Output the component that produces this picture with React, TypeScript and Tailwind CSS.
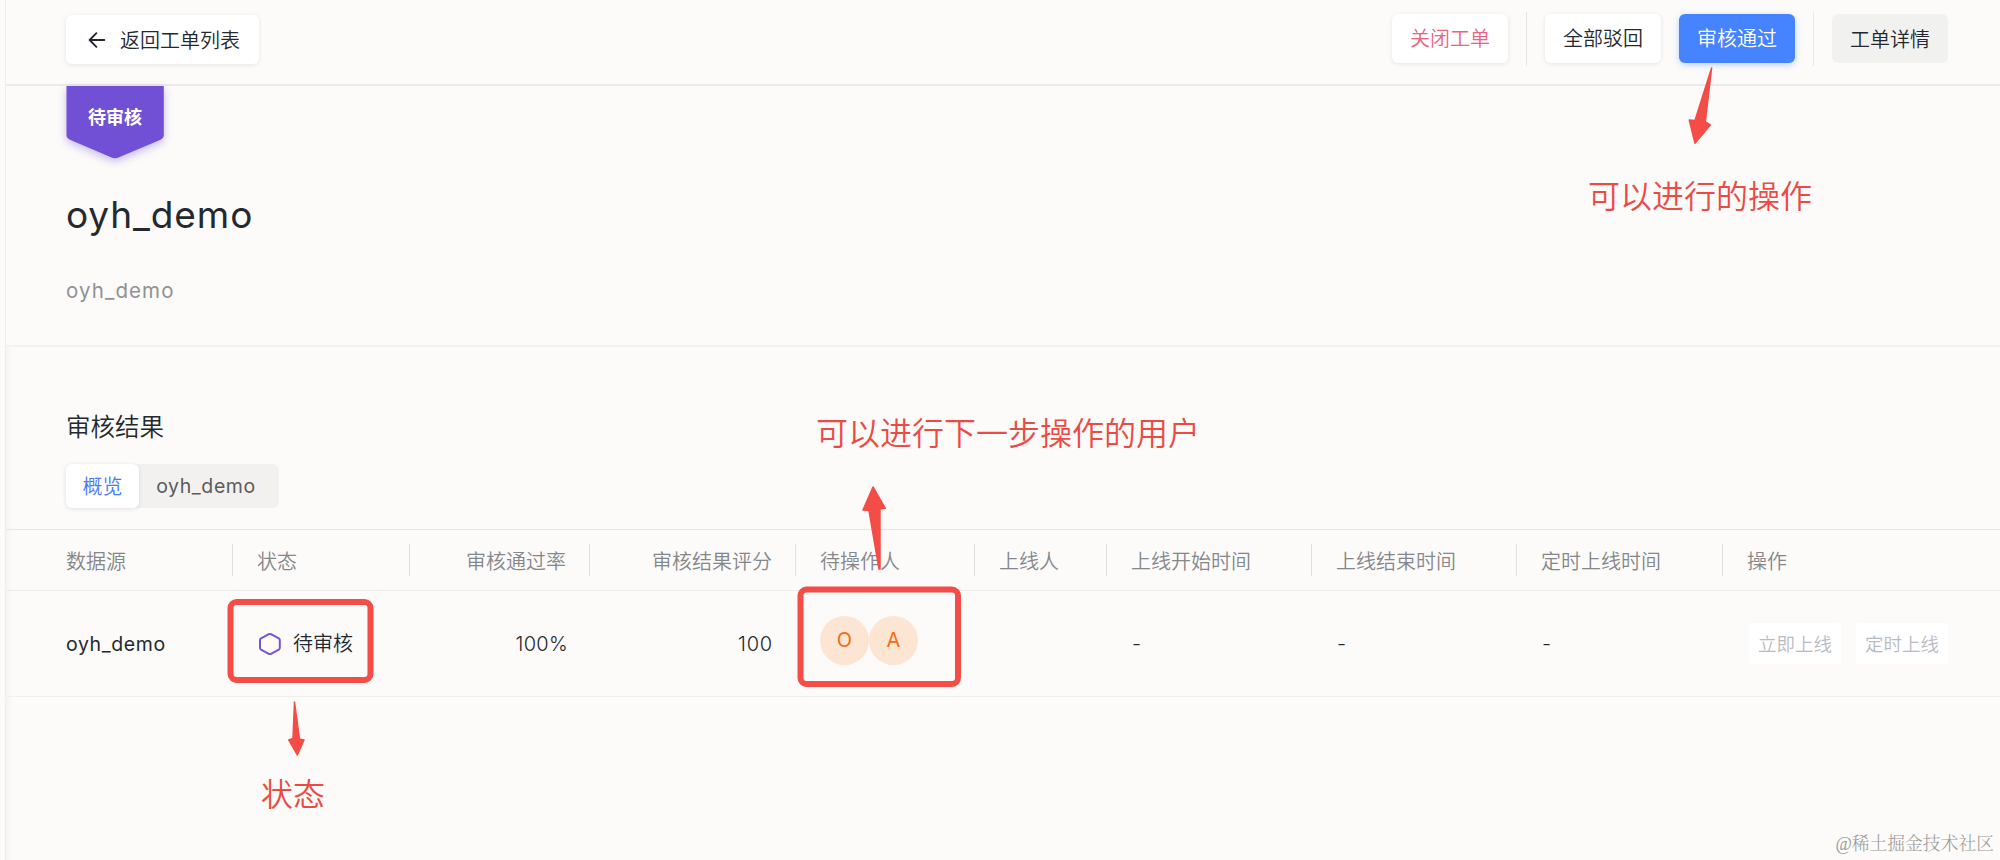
import React from 'react';

interface Column {
  title: string;
  align?: 'right';
}

const columns: Column[] = [
  { title: '数据源' },
  { title: '状态' },
  { title: '审核通过率', align: 'right' },
  { title: '审核结果评分', align: 'right' },
  { title: '待操作人' },
  { title: '上线人' },
  { title: '上线开始时间' },
  { title: '上线结束时间' },
  { title: '定时上线时间' },
  { title: '操作' },
];

const gridColumns = 'grid grid-cols-[227px_177px_180px_206px_179px_132px_205px_205px_206px_1fr]';

const BackIcon = () => (
  <svg width="18" height="18" viewBox="0 0 18 18" fill="none" stroke="#24292f" strokeWidth="1.9" strokeLinecap="round" strokeLinejoin="round">
    <path d="M16.3 9H1.6M8.4 2.2 1.6 9l6.8 6.8" />
  </svg>
);

const HexagonIcon = () => (
  <svg width="25" height="24" viewBox="0 0 25 24" fill="none" stroke="#7454d8" strokeWidth="2" strokeLinejoin="round">
    <path d="M14 2.2 L21.8 6.4 Q22.8 7 22.8 8.2 V15.8 Q22.8 17 21.8 17.6 L14 21.8 Q12.9 22.4 11.8 21.8 L4 17.6 Q3 17 3 15.8 V8.2 Q3 7 4 6.4 L11.8 2.2 Q12.9 1.6 14 2.2Z" />
  </svg>
);

const StatusBadge = () => (
  <div className="relative w-[98px] h-[73px]">
    <svg className="absolute left-0 top-0 overflow-visible drop-shadow-[0_3px_4px_rgba(116,84,216,0.4)]" width="98" height="73" viewBox="0 0 98 73">
      <path d="M0.5 0H97.8V49Q97.8 52 94.5 53.8L53 71.3Q49 73 45 71.3L4 53.8Q0.5 52 0.5 49Z" fill="#7250d6" />
    </svg>
    <span className="relative block pt-[18px] text-center text-[18px] leading-[28px] font-bold text-white">待审核</span>
  </div>
);

const Avatar: React.FC<{ name: string }> = ({ name }) => (
  <span className="flex items-center justify-center w-[49px] h-[49px] rounded-full bg-[#fde5d3] font-normal text-[20px] text-[#f56c0b]">{name}</span>
);

const Header = () => (
  <header className="flex items-start justify-between h-[86px] border-b-2 border-[#ebebe9] pl-[60px] pr-[52px]">
    <button className="flex items-center mt-[15px] h-[49px] w-[193px] rounded-md bg-white pl-[22px] shadow-[0_1px_5px_rgba(0,0,0,0.09)]">
      <BackIcon />
      <span className="ml-[14px] pt-0.5">返回工单列表</span>
    </button>
    <div className="flex items-center mt-[14px] h-[49px]">
      <button className="w-[116px] h-[49px] rounded-md bg-white pt-px text-[#e9647f] shadow-[0_1px_5px_rgba(0,0,0,0.09)]">关闭工单</button>
      <i className="mx-[18px] w-px h-[54px] bg-[#e4e4e2]" />
      <button className="w-[116px] h-[49px] rounded-md bg-white pt-px shadow-[0_1px_5px_rgba(0,0,0,0.09)]">全部驳回</button>
      <button className="ml-[18px] w-[116px] h-[49px] rounded-md bg-[#4583ff] pt-px text-white shadow-[0_2px_6px_rgba(69,131,255,0.35)]">审核通过</button>
      <i className="mx-[18px] w-px h-[54px] bg-[#e9e9e7]" />
      <button className="w-[116px] h-[49px] rounded-md bg-[#f1f1ef] pt-[3px]">工单详情</button>
    </div>
  </header>
);

const TicketInfo = () => (
  <section className="h-[261px] border-b-2 border-[#f2f2f0] pl-[60px] font-normal">
    <StatusBadge />
    <h1 className="mt-[34px] text-[37px] leading-[44px] tracking-[0.9px]">oyh_demo</h1>
    <p className="mt-[39px] text-[20.5px] leading-[30px] tracking-[1.1px] text-[#909296]">oyh_demo</p>
  </section>
);

const ResultTabs = () => (
  <div className="flex mt-[21px] h-[44px] w-[213px] rounded-md bg-[#f2f1ef]">
    <button className="w-[73px] rounded-md bg-white pt-0.5 text-[#4a78f5] shadow-[0_1px_5px_rgba(0,0,0,0.1)]">概览</button>
    <button className="w-[134px] font-normal text-[19.5px] tracking-[0.6px] text-[#5b5b5b]">oyh_demo</button>
  </div>
);

const ResultTable = () => (
  <div className="mt-[21px] border-t border-[#e6e6e4]">
    <div className={`${gridColumns} items-center h-[61px] border-b border-[#ececea] text-[#85878b]`}>
      {columns.map((column, i) => (
        <div
          key={column.title}
          className={`flex items-center h-[32px] pt-[3px] ${column.align === 'right' ? 'justify-end pr-[23px]' : i === 0 ? 'pl-[60px]' : 'pl-6'} ${i < columns.length - 1 ? 'border-r border-[#dfdfde]' : ''}`}
        >
          {column.title}
        </div>
      ))}
    </div>
    <div className={`${gridColumns} items-center h-[106px] border-b border-[#efefed]`}>
      <div className="pl-[60px] font-normal text-[19.5px] tracking-[0.6px]">oyh_demo</div>
      <div className="flex items-center pl-6">
        <HexagonIcon />
        <span className="ml-[11px] pt-px">待审核</span>
      </div>
      <div className="pr-[22px] text-right tracking-[0.3px]">100%</div>
      <div className="pr-[23px] text-right tracking-[0.8px]">100</div>
      <div className="flex pl-6 pb-[7px]">
        <Avatar name="O" />
        <Avatar name="A" />
      </div>
      <div />
      <div className="pl-[25px]">-</div>
      <div className="pl-[25px]">-</div>
      <div className="pl-[25px]">-</div>
      <div className="flex gap-[15px] pl-[26px] text-[18.5px] text-[#b9bbc2]">
        <button className="w-[92px] h-[41px] rounded bg-white">立即上线</button>
        <button className="w-[92px] h-[41px] rounded bg-white">定时上线</button>
      </div>
    </div>
  </div>
);

// Red callouts drawn over the page
const Annotations = () => (
  <div className="absolute inset-0 pointer-events-none text-[32px] leading-[40px] text-[#ea4b45]">
    <svg className="absolute inset-0" width="2000" height="860" viewBox="0 0 2000 860" fill="#f44c46" stroke="#f44c46" strokeWidth="1.5" strokeLinejoin="round">
      <path d="M1711.6 68 1705.3 122 1710.3 125 1695 143.3 1689.3 120 1695 120.5Z" />
      <path d="M873 487 885.3 508.3 880 509 880 569 879 569 869 510.5 863 510Z" />
      <path d="M294.5 702 299.5 739 304 740 297.3 755 288.7 740 293 738.5Z" />
      <rect x="230.5" y="602" width="140" height="78" rx="6" fill="none" strokeWidth="6" />
      <rect x="800.5" y="589.5" width="157.5" height="94.5" rx="6" fill="none" strokeWidth="6" />
    </svg>
    <span className="absolute left-[1588px] top-[177px]">可以进行的操作</span>
    <span className="absolute left-[816px] top-[414px] whitespace-nowrap">可以进行下一步操作的用户</span>
    <span className="absolute left-[261px] top-[775px]">状态</span>
  </div>
);

const App: React.FC = () => {
  return (
    <div className="relative w-[2000px] h-[860px] overflow-hidden bg-[#fcfbf9] pl-[5px] font-['Inter','Noto_Sans_CJK_SC',sans-serif] font-[350] text-[20px] leading-[30px] text-[#24292f]">
      <main className="h-full border-l border-[#efeeec]">
        <Header />
        <TicketInfo />
        <section className="h-[513px] pt-[64px] shadow-[inset_8px_0_8px_-8px_rgba(0,0,0,0.06)]">
          <div className="pl-[60px]">
            <h2 className="text-[24.5px] leading-[32px]">审核结果</h2>
            <ResultTabs />
          </div>
          <ResultTable />
        </section>
      </main>
      <Annotations />
      <div className="absolute right-[6px] bottom-[3px] font-['Liberation_Serif','Noto_Serif_CJK_SC','Noto_Sans_CJK_SC',serif] text-[17.8px] leading-[26px] text-[#9a9a98]">@稀土掘金技术社区</div>
    </div>
  );
};

export default App;
